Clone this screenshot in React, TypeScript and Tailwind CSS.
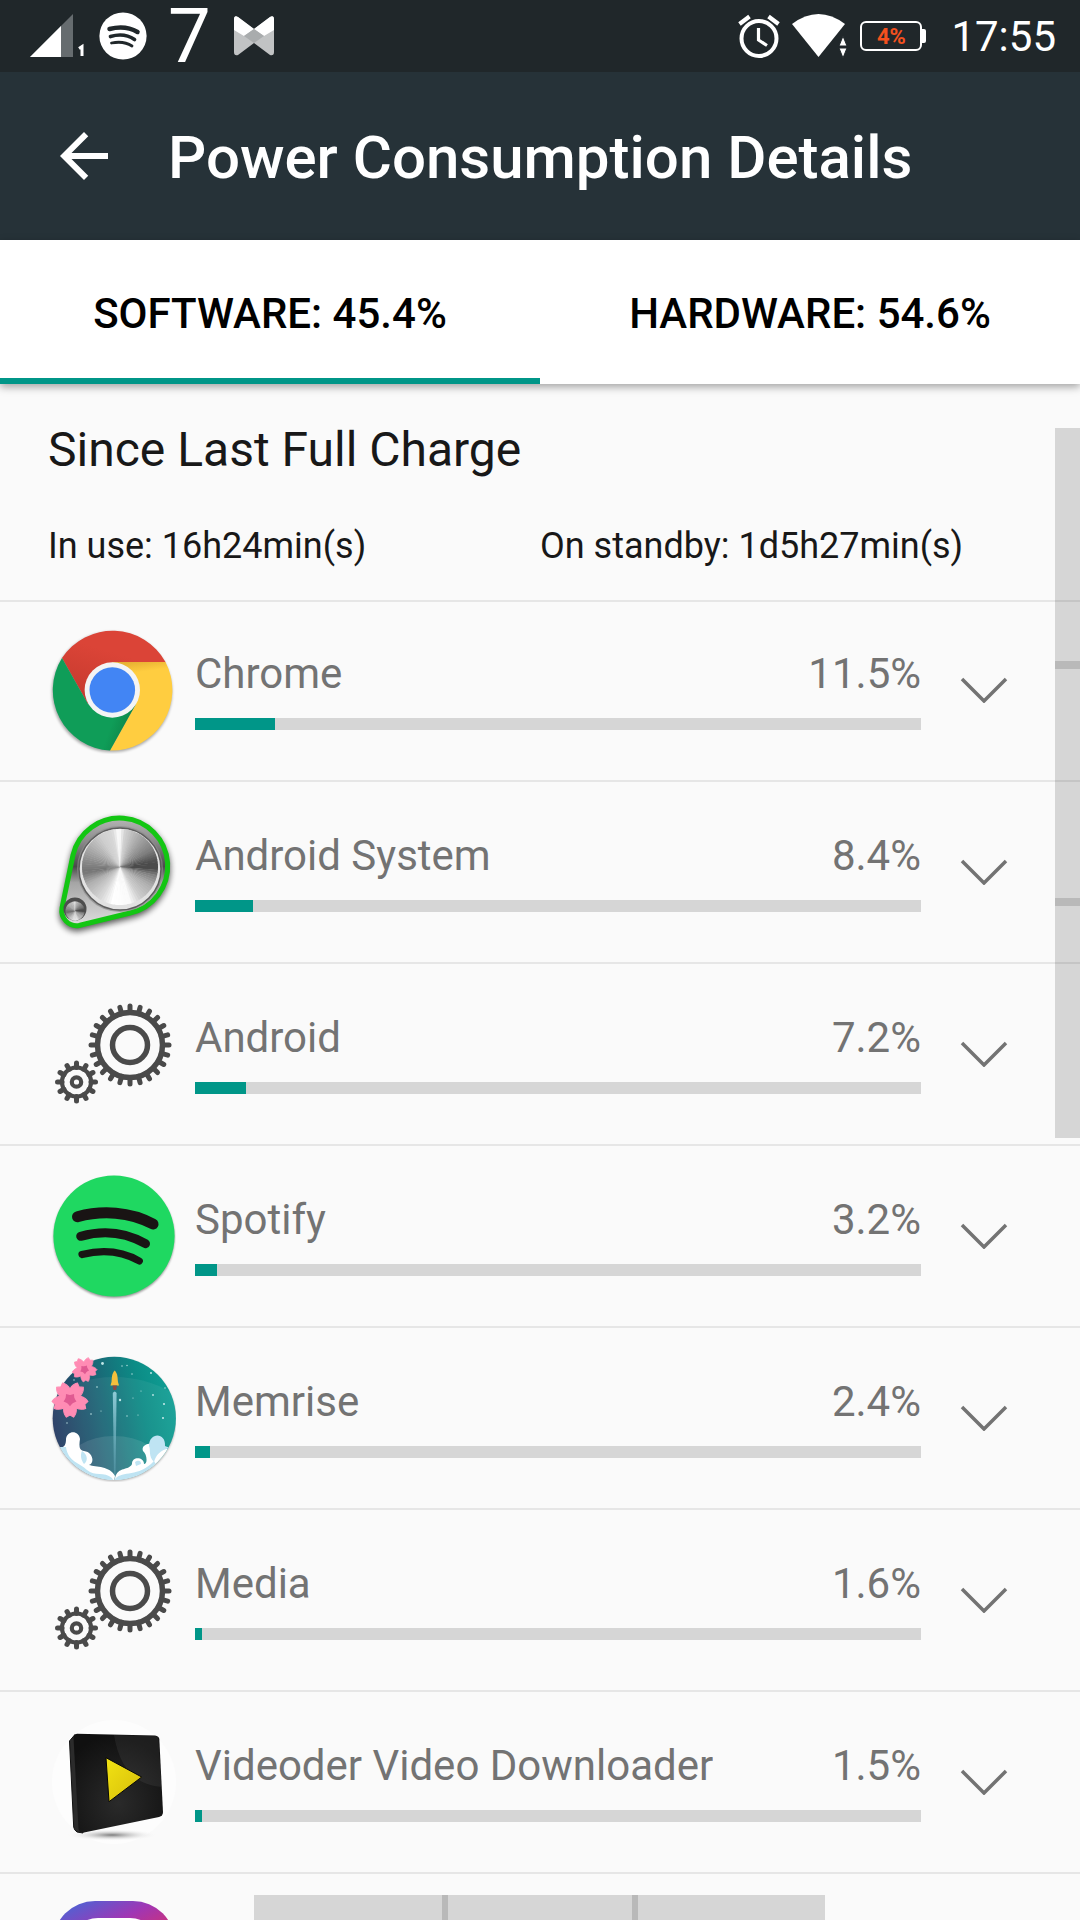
import { useState, type ReactNode } from "react";

interface AppUsage {
  name: string;
  percent: number;
  icon: ReactNode;
}

const TABS = [
  { id: "software", label: "SOFTWARE: 45.4%" },
  { id: "hardware", label: "HARDWARE: 54.6%" },
];

function ChromeIcon() {
  return (
    <svg viewBox="0 0 128 128" className="size-32" aria-hidden="true">
      <defs>
        <linearGradient id="chromeRed" x1="0.2" y1="1" x2="0.5" y2="0.3">
          <stop offset="0" stopColor="#c4392d" />
          <stop offset="1" stopColor="#db4437" />
        </linearGradient>
        <linearGradient id="chromeYellow" x1="0" y1="0" x2="0.1" y2="1">
          <stop offset="0" stopColor="#e0a92f" />
          <stop offset="0.16" stopColor="#ffcd40" />
        </linearGradient>
        <linearGradient id="chromeGreen" x1="1" y1="0.7" x2="0.5" y2="0.5">
          <stop offset="0" stopColor="#0c8045" />
          <stop offset="0.5" stopColor="#0f9d58" />
        </linearGradient>
        <filter id="chromeShadow" x="-10%" y="-10%" width="120%" height="120%">
          <feGaussianBlur stdDeviation="1.5" />
        </filter>
      </defs>
      <circle cx="64" cy="66" r="60" fill="#000" opacity="0.35" filter="url(#chromeShadow)" />
      <path d="M14 32 A60.500 60.500 0 0 1 117.500 36 L100 60 H40 L40 78 Z" fill="url(#chromeRed)" />
      <path d="M64 36 H117.500 A60.500 60.500 0 0 1 62 124.500 L88 78 Z" fill="url(#chromeYellow)" />
      <path d="M14 32 A60.500 60.500 0 0 0 62 124.500 L88 78 L64 90 L40 78 Z" fill="url(#chromeGreen)" />
      <circle cx="64.3" cy="64" r="27.7" fill="#f4f4f4" />
      <circle cx="64.3" cy="64" r="22.8" fill="#4285f4" />
    </svg>
  );
}

// Brushed metal look: [angle, gray level] stops going clockwise from the right
const METAL_STOPS = [
  [0, 75],
  [12, 130],
  [30, 175],
  [55, 205],
  [72, 250],
  [100, 255],
  [120, 215],
  [150, 175],
  [170, 115],
  [182, 130],
  [205, 165],
  [235, 205],
  [255, 215],
  [266, 255],
  [276, 210],
  [300, 170],
  [330, 125],
  [350, 75],
  [360, 75],
];

function metalShade(angle: number) {
  const i = METAL_STOPS.findIndex(([stop]) => stop > angle);
  const [a0, g0] = METAL_STOPS[i - 1];
  const [a1, g1] = METAL_STOPS[i];
  const g = Math.round(g0 + ((g1 - g0) * (angle - a0)) / (a1 - a0));
  return `rgb(${g},${g},${g})`;
}

function MetalDisc({ cx, cy, r }: { cx: number; cy: number; r: number }) {
  const rad = Math.PI / 180;
  return (
    <g>
      {Array.from({ length: 90 }, (_, i) => {
        const a = i * 4;
        const p = [a, a + 5].map((d) => `${cx + r * Math.cos(d * rad)} ${cy + r * Math.sin(d * rad)}`);
        return <path key={a} d={`M${cx} ${cy} L${p[0]} A${r} ${r} 0 0 1 ${p[1]} Z`} fill={metalShade(a)} />;
      })}
    </g>
  );
}

function SystemIcon() {
  return (
    <svg viewBox="0 0 128 128" className="size-32 overflow-visible" aria-hidden="true">
      <defs>
        <linearGradient id="beltFill" x1="0" y1="0" x2="0" y2="1">
          <stop offset="0" stopColor="#b5b5b5" />
          <stop offset="0.2" stopColor="#8f8f8f" />
          <stop offset="0.45" stopColor="#4a4a4a" />
          <stop offset="0.6" stopColor="#a5a5a5" />
          <stop offset="1" stopColor="#dedede" />
        </linearGradient>
        <filter id="beltShadow" x="-20%" y="-20%" width="140%" height="140%">
          <feGaussianBlur stdDeviation="3" />
        </filter>
      </defs>
      <path
        d="M25 47 A48 48 0 1 1 82 105 L31 117.500 A15 15 0 0 1 14 100 Z"
        fill="#000"
        stroke="#000"
        strokeWidth="5"
        opacity="0.65"
        filter="url(#beltShadow)"
        transform="translate(0 3)"
      />
      <path
        d="M25 47 A48 48 0 1 1 82 105 L31 117.500 A15 15 0 0 1 14 100 Z"
        fill="url(#beltFill)"
        stroke="#13c613"
        strokeWidth="5"
      />
      <circle cx="72" cy="61" r="43" fill="#8c8c8c" opacity="0.7" />
      <circle cx="72" cy="61" r="41" fill="#e2e2e2" stroke="#5d5d5d" strokeWidth="1.500" />
      <MetalDisc cx={72} cy={59} r={38} />
      <circle cx="27" cy="101" r="11.500" fill="#4d4d4d" />
      <MetalDisc cx={27} cy={103} r={9.5} />
    </svg>
  );
}

interface GearProps {
  cx: number;
  cy: number;
  teeth: number;
  outer: number;
  ring: number;
  hub: number;
  stroke: number;
}

function Gear({ cx, cy, teeth, outer, ring, hub, stroke }: GearProps) {
  return (
    <g fill="none" stroke="#4a4a4a" strokeWidth={stroke}>
      {Array.from({ length: teeth }, (_, i) => (
        <line
          key={i}
          x1={cx}
          x2={cx}
          y1={cy - ring}
          y2={cy - outer + 2.5}
          strokeWidth="5"
          strokeLinecap="round"
          transform={`rotate(${(i * 360) / teeth} ${cx} ${cy})`}
        />
      ))}
      <circle cx={cx} cy={cy} r={ring} />
      <circle cx={cx} cy={cy} r={hub} />
    </g>
  );
}

function GearsIcon() {
  return (
    <svg viewBox="0 0 128 128" className="size-32" aria-hidden="true">
      <Gear cx={82} cy={55} teeth={24} outer={41.5} ring={32.5} hub={17.5} stroke={5.5} />
      <Gear cx={28.5} cy={92} teeth={12} outer={21.5} ring={14.5} hub={4.7} stroke={4.2} />
    </svg>
  );
}

function SpotifyIcon() {
  return (
    <svg viewBox="0 0 128 128" className="size-32" aria-hidden="true">
      <defs>
        <filter id="spotifyShadow" x="-10%" y="-10%" width="120%" height="120%">
          <feGaussianBlur stdDeviation="1" />
        </filter>
      </defs>
      <circle cx="66" cy="65.500" r="60.500" fill="#000" opacity="0.4" filter="url(#spotifyShadow)" />
      <circle cx="66" cy="64" r="60.600" fill="#1fd861" />
      <g fill="none" stroke="#191414" strokeLinecap="round">
        <path d="M29.500 44.700 C54 38 82 39.500 105 52" strokeWidth="11" />
        <path d="M32.700 64.300 C55 58 78 60.500 97.500 71.700" strokeWidth="9" />
        <path d="M34 82.500 C54 77.500 73 78.500 91.300 89" strokeWidth="7.200" />
      </g>
    </svg>
  );
}

function Flower({ x, y, size, turn }: { x: number; y: number; size: number; turn: number }) {
  return (
    <g transform={`translate(${x} ${y}) rotate(${turn}) scale(${size})`}>
      {[0, 72, 144, 216, 288].map((angle) => (
        <path
          key={angle}
          d="M0 0 C-8 -4 -7 -13 -3.500 -17 L0 -15 L3.500 -17 C7 -13 8 -4 0 0 Z"
          fill="#ff8cb4"
          stroke="#ff8cb4"
          strokeWidth="1"
          transform={`rotate(${angle})`}
        />
      ))}
      {[0, 72, 144, 216, 288].map((angle) => (
        <path key={angle} d="M-3 -3 L0 -6.500 L3 -3 L0 1 Z" fill="#e05a92" transform={`rotate(${angle})`} />
      ))}
    </g>
  );
}

const STARS = [
  [54.5, 9.5, 1.4],
  [74, 12, 0.7],
  [79, 11.5, 0.7],
  [84, 20, 0.7],
  [103, 19, 1],
  [49, 33, 0.8],
  [26, 26, 0.7],
  [72, 46, 1.2],
  [85, 44, 0.6],
  [93, 37, 0.6],
  [105, 41, 0.9],
  [116, 50, 1.1],
  [43, 60, 0.8],
  [53, 57, 0.6],
  [79, 62, 0.7],
  [90, 61, 0.6],
  [115, 64, 1.1],
  [19, 69, 0.7],
  [117, 34, 0.7],
];

function MemriseIcon() {
  return (
    <svg viewBox="0 0 128 128" className="size-32" aria-hidden="true">
      <defs>
        <linearGradient id="memriseSky" x1="0" y1="0.6" x2="1" y2="0.4">
          <stop offset="0" stopColor="#25335f" />
          <stop offset="0.4" stopColor="#1c6274" />
          <stop offset="0.75" stopColor="#0c8c86" />
          <stop offset="1" stopColor="#0f9f94" />
        </linearGradient>
        <linearGradient id="memriseTrail" x1="0" y1="0" x2="0" y2="1">
          <stop offset="0" stopColor="#8fcbd6" />
          <stop offset="1" stopColor="#5d9fb0" stopOpacity="0.5" />
        </linearGradient>
        <clipPath id="memriseClip">
          <circle cx="66.3" cy="64.3" r="61.600" />
        </clipPath>
        <filter id="memriseShadow" x="-10%" y="-10%" width="120%" height="120%">
          <feGaussianBlur stdDeviation="1" />
        </filter>
      </defs>
      <circle cx="66.3" cy="65.500" r="61.500" fill="#000" opacity="0.3" filter="url(#memriseShadow)" />
      <g clipPath="url(#memriseClip)">
        <rect width="128" height="128" fill="url(#memriseSky)" />
        <ellipse cx="66" cy="98" rx="95" ry="75" fill="#fff" opacity="0.06" />
        <ellipse cx="66" cy="112" rx="48" ry="30" fill="#fff" opacity="0.1" />
        {STARS.map(([x, y, r]) => (
          <circle key={`${x}-${y}`} cx={x} cy={y} r={r} fill="#bfe6e6" />
        ))}
        <path d="M64.800 39 Q66.700 36 68.600 39 L67.500 122 H66 Z" fill="url(#memriseTrail)" />
        {/* left wave */}
        <path
          d="M0 94 H10 C17 94 18 90 18 85 C19 76 31 76 32 85 C31 92 31 96 36 97 C45 98 47 109 41 111 C48 113 62 112 67 122 L66 128 H0 Z"
          fill="#fff"
        />
        <path d="M4 93 H18 C20 108 32 109 39 116 C47 123 56 117 64 124 L66 128 H0 Z" fill="#bfe4f3" />
        <path d="M34 97 C40 101 40 107 36 110 C33 106 32 101 34 97 Z" fill="#bfe4f3" />
        {/* right wave */}
        <path
          d="M128 95 H115 C118 90 110 88 105 90 C99 89 93 92 95 97 C99 100 100 110 96 110 C96 103 84 102 84 110 C81 117 70 112 67 124 L66 128 H128 Z"
          fill="#fff"
        />
        <path d="M101 92 C101 78 118 78 117 92 L122 94 C112 96 108 101 106 108 C100 102 103 96 101 92 Z" fill="#bfe4f3" />
        <path d="M87 108 C90 106 93 106 93 110 L88 112 Z" fill="#bfe4f3" />
        <path d="M67 125 C75 116 90 124 106 107 L112 118 L90 128 H66 Z" fill="#bfe4f3" />
      </g>
      <path d="M66.700 16.500 C70 20 69.500 24 70 28 L71 31.500 H62.500 L63.500 28 C64 24 63.500 20 66.700 16.500 Z" fill="#f5c03c" />
      <path d="M64.500 31.500 H69 L68 36 H65.500 Z" fill="#8a4a45" />
      <Flower x={36.5} y={15.5} size={0.72} turn={30} />
      <Flower x={22} y={45.5} size={1.04} turn={-36} />
    </svg>
  );
}

function VideoderIcon() {
  return (
    <svg viewBox="0 0 128 128" className="size-32" aria-hidden="true">
      <defs>
        <radialGradient id="videoderFloor">
          <stop offset="0" stopColor="#7d7d7d" />
          <stop offset="1" stopColor="#fff" stopOpacity="0" />
        </radialGradient>
        <radialGradient id="videoderFace" cx="0.5" cy="0.7" r="0.7">
          <stop offset="0" stopColor="#2a2a2a" />
          <stop offset="1" stopColor="#101010" />
        </radialGradient>
        <linearGradient id="videoderPlay" x1="0" y1="0" x2="1" y2="1">
          <stop offset="0" stopColor="#f2e313" />
          <stop offset="1" stopColor="#d6bd0a" />
        </linearGradient>
      </defs>
      <circle cx="66" cy="64" r="62" fill="#fdfdfd" />
      <ellipse cx="64" cy="117" rx="46" ry="6" fill="url(#videoderFloor)" />
      <path d="M21.500 23 L27 16.500 L36 60 L35 115 L29 114 Q26 112 25.700 109 Z" fill="#2b2b2b" stroke="#111" />
      <path
        d="M29 15.700 L107 17.500 Q111 18 111.300 21 L115 94 Q115 98 111 99 L36 114.500 Q31 115 30.500 111 L25.500 20 Q25.500 16 29 15.700 Z"
        fill="url(#videoderFace)"
      />
      <path d="M66 17 L107 18 Q110 18 110.500 21 L113.500 69 Q74 66 66 17 Z" fill="#fff" opacity="0.06" />
      <path d="M58 39.700 L93.700 59 L61 83.700 Z" fill="url(#videoderPlay)" stroke="#070707" strokeWidth="1" />
    </svg>
  );
}

function InstagramIcon() {
  return (
    <svg viewBox="0 0 128 128" className="size-32" aria-hidden="true">
      <defs>
        <linearGradient id="instagramFill" x1="0.1" y1="0" x2="0.6" y2="1">
          <stop offset="0" stopColor="#4468d8" />
          <stop offset="0.3" stopColor="#a036b4" />
          <stop offset="0.6" stopColor="#e0305f" />
          <stop offset="1" stopColor="#fdb14b" />
        </linearGradient>
      </defs>
      <rect x="5" y="0" width="122" height="122" rx="42" fill="url(#instagramFill)" />
      <rect x="26" y="21" width="80" height="80" rx="24" fill="none" stroke="#fff" strokeWidth="8" />
      <circle cx="66" cy="61" r="19" fill="none" stroke="#fff" strokeWidth="8" />
      <circle cx="89" cy="38" r="5" fill="#fff" />
    </svg>
  );
}

const APPS: AppUsage[] = [
  { name: "Chrome", percent: 11.5, icon: <ChromeIcon /> },
  { name: "Android System", percent: 8.4, icon: <SystemIcon /> },
  { name: "Android", percent: 7.2, icon: <GearsIcon /> },
  { name: "Spotify", percent: 3.2, icon: <SpotifyIcon /> },
  { name: "Memrise", percent: 2.4, icon: <MemriseIcon /> },
  { name: "Media", percent: 1.6, icon: <GearsIcon /> },
  { name: "Videoder Video Downloader", percent: 1.5, icon: <VideoderIcon /> },
];

function StatusBar() {
  return (
    <div className="flex h-[72px] shrink-0 items-center justify-between bg-[#20272a] pl-[30px] pr-6 text-white">
      <div className="flex items-center">
        <svg viewBox="0 0 56 44" className="h-11 w-14" aria-hidden="true">
          <path d="M0 43 L43 0 V43 Z" fill="#666c6f" />
          <path d="M0 43 L31 12 V43 Z" fill="#fff" />
          <path d="M49 34.500 L52 32.500 V42" fill="none" stroke="#fff" strokeWidth="3" />
        </svg>
        <svg viewBox="0 0 48 48" className="ml-[13px] size-12" aria-hidden="true">
          <circle cx="24" cy="24" r="23.600" fill="#fff" />
          <g fill="none" stroke="#20272a" strokeLinecap="round">
            <path d="M10.500 17 C20 14.500 30 15 38.500 20" strokeWidth="4.500" />
            <path d="M11.500 24.500 C20 22 29 23 35.500 27.500" strokeWidth="3.700" />
            <path d="M12.500 31 C20 29.500 27 30 33 34" strokeWidth="2.800" />
          </g>
        </svg>
        <span className="ml-[21px] text-[76px] leading-[72px]">7</span>
        <svg viewBox="0 0 42 40" className="ml-[22px] h-10 w-[42px]" aria-hidden="true">
          <path
            d="M1 3 Q1 -1 5 1 L21 13 L37 1 Q41 -1 41 3 V36 Q41 40 37 39 L21 27 L5 39 Q1 40 1 36 Z"
            fill="#c1c3c4"
          />
          <path d="M1 3 Q1 -1 5 1 L21 13 L37 1 Q41 -1 41 3 V14 L31 20 L21 13 L11 20 L1 14 Z" fill="#fff" />
          <path d="M11 20 L21 13 L31 20 L21 27 Z" fill="#a9acad" />
        </svg>
      </div>
      <div className="flex items-center">
        <svg viewBox="0 0 42 44" className="h-11 w-[42px]" aria-hidden="true">
          <g fill="none" stroke="#fff">
            <circle cx="21" cy="24.500" r="17.500" strokeWidth="4" />
            <path d="M20.500 14 V26 L29 31.500" strokeWidth="3.200" />
            <path d="M1.500 10 L11.500 2.500 M40.500 10 L30.500 2.500" strokeWidth="4.200" />
          </g>
        </svg>
        <svg viewBox="0 0 56 44" className="ml-3 h-11 w-14" aria-hidden="true">
          <path d="M0 10 Q26.500 -10 53 10 L26.500 43 Z" fill="#fff" />
          <path d="M47 32 L51 22 L55 32 Z M47 34 L51 44 L55 34 Z" fill="#fff" stroke="#20272a" />
        </svg>
        <div className="ml-3 flex items-center">
          <span className="flex h-[30px] w-[62px] items-center justify-center rounded-md border-2 border-white pt-[2px] text-[22px] font-bold leading-none text-[#f4511e]">
            4%
          </span>
          <span className="h-[14px] w-1 rounded-r-xs bg-white" />
        </div>
        <span className="ml-[25px] pt-[2px] text-[42px] leading-[50px]">17:55</span>
      </div>
    </div>
  );
}

function UsageRow({ app }: { app: AppUsage }) {
  const [open, setOpen] = useState(false);
  const filled = Math.floor(app.percent);

  return (
    <li className="flex h-[182px] items-center border-b-2 border-[#e6e6e6] pl-12 pr-8">
      <div className="shrink-0">{app.icon}</div>
      <div className="ml-[19px] min-w-0 flex-1 pb-1">
        <div className="flex justify-between text-[42px] leading-[60px] text-[#737373]">
          <span className="truncate">{app.name}</span>
          <span>{app.percent}%</span>
        </div>
        <div
          role="progressbar"
          aria-label={app.name}
          aria-valuenow={filled}
          className="mt-[14px] mb-[2px] h-3 bg-[#d6d6d6]"
        >
          <div className="h-full bg-[#009688]" style={{ width: `${filled}%` }} />
        </div>
      </div>
      <button
        type="button"
        aria-label={`Details for ${app.name}`}
        aria-expanded={open}
        onClick={() => setOpen((o) => !o)}
        className="flex h-full w-[127px] shrink-0 items-center justify-center pr-[2px]"
      >
        <svg viewBox="0 0 48 26" className={open ? "h-[26px] w-12 rotate-180" : "h-[26px] w-12"} aria-hidden="true">
          <path d="M2 2 L24 24 L46 2" fill="none" stroke="#737373" strokeWidth="3.500" />
        </svg>
      </button>
    </li>
  );
}

export default function App() {
  const [tab, setTab] = useState("software");

  return (
    <div className="relative flex h-screen flex-col overflow-hidden bg-[#fafafa] font-[Roboto,sans-serif]">
      <StatusBar />

      <header className="flex h-[168px] shrink-0 items-center bg-[#263238] pl-12 text-white">
        <button type="button" aria-label="Back">
          <svg viewBox="0 0 24 24" className="size-[72px]" fill="currentColor" aria-hidden="true">
            <path d="M20 11H7.830l5.590-5.590L12 4l-8 8 8 8 1.410-1.410L7.830 13H20v-2z" />
          </svg>
        </button>
        <h1 className="ml-12 pt-1 text-[60px] font-medium leading-[72px]">Power Consumption Details</h1>
      </header>

      <div role="tablist" className="z-10 grid h-36 shrink-0 grid-cols-2 bg-white shadow-[0_3px_8px_rgba(0,0,0,0.35)]">
        {TABS.map((t) => (
          <button
            key={t.id}
            type="button"
            role="tab"
            aria-selected={tab === t.id}
            onClick={() => setTab(t.id)}
            className={
              tab === t.id
                ? "border-y-6 border-t-transparent border-b-[#009688] pt-[2px] text-[42px] font-medium text-black"
                : "border-y-6 border-transparent pt-[2px] text-[42px] font-medium text-black"
            }
          >
            {t.label}
          </button>
        ))}
      </div>

      <main className="min-h-0 flex-1 overflow-hidden">
        <section className="border-b-2 border-[#e6e6e6] pt-9 pb-[30px] text-[#181818]">
          <h2 className="pl-12 text-[48px] leading-[60px]">Since Last Full Charge</h2>
          <div className="mt-[42px] grid grid-cols-2 text-[36px] leading-[48px]">
            <p className="pl-12">In use: 16h24min(s)</p>
            <p>On standby: 1d5h27min(s)</p>
          </div>
        </section>
        <ul className="-mt-[2px]">
          {APPS.map((app) => (
            <UsageRow key={app.name} app={app} />
          ))}
          <li className="flex h-[182px] items-center pl-12">
            <InstagramIcon />
          </li>
        </ul>
      </main>

      {/* edge gesture zones floating over the list */}
      <div className="absolute right-0 top-[428px] z-20 flex h-[710px] w-[25px] flex-col">
        <div className="h-[233px] bg-black/14" />
        <div className="h-2 bg-black/26" />
        <div className="h-[229px] bg-black/14" />
        <div className="h-2 bg-black/26" />
        <div className="flex-1 bg-black/14" />
      </div>
      <div className="absolute bottom-0 left-[254px] z-20 flex h-[25px] w-[571px]">
        <div className="w-[188px] bg-black/14" />
        <div className="w-[6px] bg-black/26" />
        <div className="w-[184px] bg-black/14" />
        <div className="w-[6px] bg-black/26" />
        <div className="flex-1 bg-black/14" />
      </div>
    </div>
  );
}
